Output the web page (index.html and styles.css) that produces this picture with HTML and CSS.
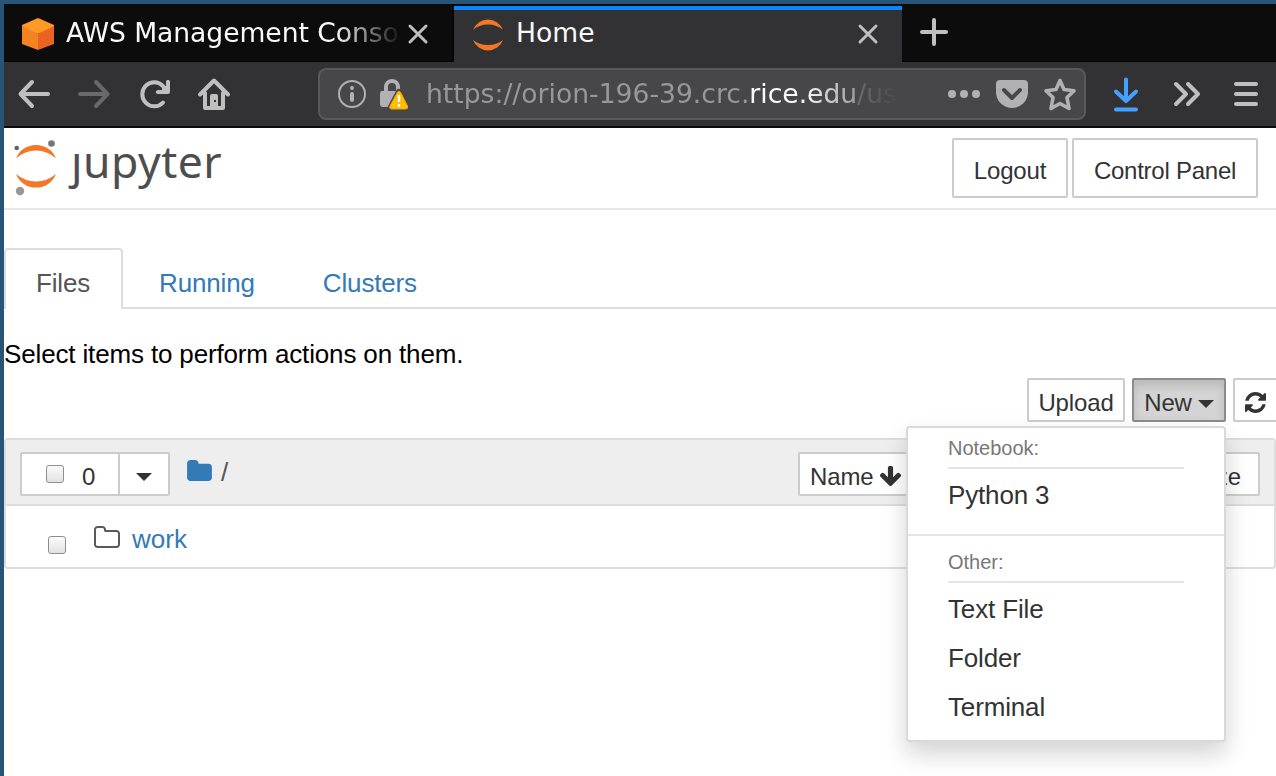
FILE: index.html
```html
<!DOCTYPE html>
<html lang="en">
<head>
<meta charset="utf-8">
<title>Home</title>
<link rel="stylesheet" href="styles.css">
</head>
<body>
<div class="window">
  <div class="tabbar">
    <div class="tab">
      <svg class="favicon" width="32" height="32" viewBox="0 0 32 32"><path fill="#ff9a24" d="M16 0 32 7v3L16 16 0 10V7z"/><path fill="#f58321" d="M0 8 16 16v16L0 26z"/><path fill="#eb6322" d="M32 8 16 16v16l16-6z"/></svg>
      <span class="tab-title fade">AWS Management Conso</span>
      <svg class="close" width="20" height="20" viewBox="0 0 20 20"><path d="M2 2 18 18M18 2 2 18"/></svg>
    </div>
    <div class="tab active">
      <svg class="favicon" width="32" height="32" viewBox="0 0 32 32"><path fill="#f37726" d="M1 11A16 16 0 0 1 31 11Q25 5.500 16 5.500T1 11zM1 21A16 16 0 0 0 31 21Q25 26 16 26T1 21z"/></svg>
      <span class="tab-title">Home</span>
      <svg class="close" width="20" height="20" viewBox="0 0 20 20"><path d="M2 2 18 18M18 2 2 18"/></svg>
    </div>
    <svg class="newtab" width="28" height="28" viewBox="0 0 28 28"><path d="M14 2v24M2 14h24"/></svg>
  </div>

  <div class="navbar">
    <svg class="nav" width="32" height="32" viewBox="0 0 32 32"><path d="M30 16H3M14 4 2.500 16 14 28"/></svg>
    <svg class="nav dim" width="32" height="32" viewBox="0 0 32 32"><path d="M2 16h27M18 4l11.500 12L18 28"/></svg>
    <svg class="nav" width="32" height="32" viewBox="0 0 32 32"><path d="M25 24.500A12 12 0 1 1 25 8"/><path class="solid" d="M32 3.500c0-2-4-2-4 0V8l-4-1v5h-4c-2.800 0-2.800 4 0 4h10q2 0 2-2z"/></svg>
    <svg class="nav" width="32" height="32" viewBox="0 0 32 32"><path d="M2 16.500 16 2.500l14 14M7 15v15h18V15"/><path class="solid" fill-rule="evenodd" d="M12 30V18q0-2 2-2h4q2 0 2 2v12zM16 22v2h2v-2z"/></svg>
    <div class="urlbar">
      <svg class="info" width="28" height="28" viewBox="0 0 28 28"><circle cx="14" cy="14" r="13" fill="none" stroke="#b1b1b3" stroke-width="2"/><circle cx="14" cy="8" r="2" fill="#b1b1b3"/><rect x="12" y="12" width="4" height="10" rx="2" fill="#b1b1b3"/></svg>
      <svg class="lock" width="28" height="30" viewBox="0 0 28 30"><path d="M6 13V8a6 6 0 0 1 12 0v4" fill="none" stroke="#b1b1b3" stroke-width="4"/><path d="M2 12h18v6L9 28H3q-3 0-3-3V15q0-3 2-3z" fill="#b1b1b3"/><path d="M16.500 11q2-3 4 0L28 27q1 3-2 3H10q-3 0-2-3z" fill="#474749"/><path d="M17.300 13.500q1.700-2.800 3.400 0L27.500 27q1 3-2 3h-14q-2.500 0-1.500-3z" fill="#ffbf00" stroke="#f5a400"/><path d="M19 16v7M19 25v3" stroke="#fff" stroke-width="2.400"/></svg>
      <span class="url">https://orion-196-39.crc.<b>rice.edu</b>/us</span>
      <svg class="dots" width="32" height="32" viewBox="0 0 32 32"><circle cx="4" cy="16" r="4"/><circle cx="16" cy="16" r="4"/><circle cx="28" cy="16" r="4"/></svg>
      <svg width="32" height="32" viewBox="0 0 32 32"><path fill="#b1b1b3" d="M4 2h24q4 0 4 4v8a16 16 0 0 1-32 0V6q0-4 4-4z"/><path d="M8 12l8 8 8-8" fill="none" stroke="#474749" stroke-width="4" stroke-linecap="round" stroke-linejoin="round"/></svg>
      <svg width="32" height="32" viewBox="0 0 32 32"><path d="M16 2.500l4 9 10 1.200-7 6.800L25 30.500 16 25.500l-9 5 2-11L2 12.700l10-1.200z" fill="none" stroke="#b1b1b3" stroke-width="3.600" stroke-linejoin="round"/></svg>
    </div>
    <svg class="nav blue" width="32" height="32" viewBox="0 0 32 32"><path d="M16 2v20M6 14l10 9.500 10-9.500M6 32h20" transform="translate(0 -.5)"/></svg>
    <svg class="nav" width="32" height="32" viewBox="0 0 32 32"><path d="M6 6l10 10L6 26M18 6l10 10-10 10"/></svg>
    <svg class="nav" width="32" height="32" viewBox="0 0 32 32"><path d="M6 6h20M6 16h20M6 26h20"/></svg>
  </div>

  <div class="page">
    <header class="header">
      <div class="logo">
        <svg width="44" height="58" viewBox="0 0 44 58"><path fill="#f37726" d="M2 19.500a21.500 21.500 0 0 1 40 0Q33 11.500 22 11.500T2 19.500zM2 35q9 7.500 20 7.500T42 35a21.500 21.500 0 0 1-40 0z"/><circle cx="37.500" cy="4.500" r="3.300" fill="#767677"/><circle cx="2.700" cy="9" r="2.300" fill="#616262"/><circle cx="6" cy="52" r="4.200" fill="#989798"/></svg>
        <span class="wordmark"><span class="stem">j</span>upyter</span>
      </div>
      <div class="account"><button class="btn large">Logout</button><button class="btn large">Control Panel</button></div>
    </header>

    <nav class="tabs">
      <a class="tablink current">Files</a>
      <a class="tablink">Running</a>
      <a class="tablink">Clusters</a>
    </nav>

    <p class="hint">Select items to perform actions on them.</p>

    <div class="actions">
      <button class="btn upload">Upload</button>
      <div class="dropdown">
        <button class="btn open">New<i class="caret"></i></button>
        <div class="menu">
          <div class="menu-head">Notebook:</div>
          <a class="menu-item">Python 3</a>
          <div class="divider"></div>
          <div class="menu-head">Other:</div>
          <a class="menu-item">Text File</a>
          <a class="menu-item">Folder</a>
          <a class="menu-item">Terminal</a>
        </div>
      </div>
      <button class="btn refresh"><svg width="21" height="21" viewBox="0 0 1536 1536"><path fill="#333" d="M1511 928q0 5-1 7-64 268-268 434.500t-478 166.500q-146 0-282.500-55t-243.500-157l-129 129q-19 19-45 19t-45-19-19-45v-448q0-26 19-45t45-19h448q26 0 45 19t19 45-19 45l-137 137q71 66 161 102t187 36q134 0 250-65t186-179q11-17 53-117 8-23 30-23h192q13 0 22.500 9.500t9.500 22.500zm25-800v448q0 26-19 45t-45 19h-448q-26 0-45-19t-19-45 19-45l138-138q-148-137-349-137-134 0-250 65t-186 179q-11 17-53 117-8 23-30 23h-199q-13 0-22.500-9.500t-9.500-22.500v-7q65-268 270-434.500t480-166.500q146 0 284 55.500t245 156.500l130-129q19-19 45-19t45 19 19 45z"/></svg></button>
    </div>

    <section class="list">
      <div class="list-head">
        <div class="group">
          <button class="btn select"><i class="check"></i>0</button>
          <button class="btn toggle"><i class="caret"></i></button>
        </div>
        <div class="crumbs">
          <svg width="25" height="21" viewBox="0 128 1664 1408"><path fill="#337ab7" d="M1664 608v704q0 92-66 158t-158 66h-1216q-92 0-158-66t-66-158v-960q0-92 66-158t158-66h320q92 0 158 66t66 158v32h672q92 0 158 66t66 158z"/></svg>
          <span>/</span>
        </div>
        <div class="sorts">
          <button class="btn name">Name<svg width="21" height="20" viewBox="21 0 1558 1483"><path fill="#333" d="M1579 704q0 52-37 91l-651 651q-39 37-91 37t-90-37l-651-651q-38-36-38-91 0-53 38-91l74-75q39-37 91-37 53 0 90 37l294 294v-704q0-52 38-90t90-38h128q52 0 90 38t38 90v704l294-294q37-37 90-37 52 0 91 37l75 75q37 39 37 91z"/></svg></button>
          <button class="btn size">File size</button>
        </div>
      </div>
      <div class="row">
        <i class="check"></i>
        <svg width="26" height="22" viewBox="0 128 1664 1408"><path fill="#5a5a5a" d="M1536 1312v-704q0-40-28-68t-68-28h-704q-40 0-68-28t-28-68v-64q0-40-28-68t-68-28h-320q-40 0-68 28t-28 68v960q0 40 28 68t68 28h1216q40 0 68-28t28-68zm128-704v704q0 92-66 158t-158 66h-1216q-92 0-158-66t-66-158v-960q0-92 66-158t158-66h320q92 0 158 66t66 158v32h672q92 0 158 66t66 158z"/></svg>
        <a class="entry">work</a>
      </div>
    </section>
  </div>
</div>
</body>
</html>
```
FILE: styles.css
```css
* { box-sizing: border-box; }
body { margin: 0; background: #fff; font-family: "Liberation Sans", Arial, sans-serif; font-size: 26px; letter-spacing: -0.15px; overflow: hidden; }
svg { display: block; flex: none; overflow: visible; }

.window { width: 1276px; height: 776px; padding: 4px 0 0 4px; background: #285577; overflow: hidden; }

/* Browser tabs */
.tabbar { display: flex; height: 58px; background: #0c0c0d; border-bottom: 1px solid #030303; font-family: "DejaVu Sans", sans-serif; font-size: 26.600px; letter-spacing: 0; }
.tab { display: flex; align-items: center; width: 450px; height: 57px; padding: 2px 24px 0 18px; border-right: 2px solid #050506; color: #f9f9fa; }
.tab.active { width: 448px; height: 58px; padding-top: 0; border-right: 0; background: linear-gradient(#0c0c0d 2px, #0a84ff 2px, #0a84ff 6px, #323234 6px); }
.tab-title { flex: 1; min-width: 0; margin: -3px 11px 0 12px; line-height: 57px; white-space: nowrap; }
.active .tab-title { margin-top: -2px; }
.fade { letter-spacing: -0.05px; -webkit-mask-image: linear-gradient(90deg, #000 270px, transparent 336px); mask-image: linear-gradient(90deg, #000 270px, transparent 336px); }
.active .favicon { margin-top: 3px; }
.favicon { margin-top: 1px; }
.close, .newtab { fill: none; stroke: #bfbfc0; stroke-linecap: round; }
.close { stroke-width: 3; }
.active .close { margin-top: 2px; }
.newtab { stroke-width: 4; margin: 14px 0 0 18px; }

/* Navigation toolbar */
.navbar { display: flex; align-items: center; gap: 28px; height: 66px; padding: 0 14px; background: #323234; border-bottom: 2px solid #0c0c0d; font-family: "DejaVu Sans", sans-serif; font-size: 26.600px; letter-spacing: 0; }
.nav { fill: none; stroke: #bfbfc0; stroke-width: 4; stroke-linecap: round; stroke-linejoin: round; }
.nav .solid { fill: #bfbfc0; stroke: none; }
.nav.dim { stroke: #69696b; }
.nav.blue { stroke: #45a1ff; }
.urlbar { display: flex; align-items: center; flex: 1; height: 52px; margin: 0 -4px 0 60px; padding: 0 8px 0 18px; border: 2px solid #59595b; border-radius: 8px; background: #474749; }
.lock { margin-left: 14px; }
.url { width: 480px; margin: 0 auto 0 18px; line-height: 48px; white-space: nowrap; color: #98989a; -webkit-mask-image: linear-gradient(90deg, #000 380px, transparent 474px); mask-image: linear-gradient(90deg, #000 380px, transparent 474px); }
.url b { font-weight: normal; color: #f9f9fa; }
.urlbar svg + svg:not(.lock) { margin-left: 16px; }
.dots { fill: #b1b1b3; }

/* Page header */
.page { height: 648px; background: #fff; }
.header { display: flex; justify-content: space-between; height: 82px; padding: 10px 18px 0 10px; border-bottom: 2px solid #e7e7e7; }
.logo { display: flex; gap: 13px; padding-top: 1px; }
.wordmark { height: 60px; line-height: 43px; font-family: "Noto Sans", sans-serif; font-size: 44.500px; letter-spacing: 0.500px; color: #4e4e4e; white-space: nowrap; }
.stem { display: inline-block; clip-path: inset(13px -10px -10px -20px); }
.account { display: flex; gap: 4px; }
.btn { display: flex; align-items: center; justify-content: center; height: 44px; margin: 0; padding: 5px 10px 0; border: 2px solid #ccc; border-radius: 2px; background: #fff; color: #333; font: 24px/36px "Liberation Sans", Arial, sans-serif; letter-spacing: -0.15px; white-space: nowrap; }
.large { width: 116px; height: 60px; padding: 5px 0 0; }
.large + .large { width: 186px; letter-spacing: -0.25px; }

/* Page tabs */
.tabs { display: flex; gap: 4px; height: 61px; margin-top: 38px; border-bottom: 2px solid #ddd; }
.tablink { height: 61px; padding: 3px 30px 0; border: 2px solid transparent; line-height: 60px; color: #337ab7; }
.tablink.current { width: 119px; border-color: #ddd; border-bottom: 0; border-radius: 4px 4px 0 0; background: #fff; color: #555; }
.hint { height: 69px; margin: 0; padding-top: 20px; line-height: 50px; color: #000; }

/* Action buttons and New menu */
.actions { display: flex; justify-content: flex-end; gap: 7px; height: 60px; margin-right: -24px; }
.upload { width: 98px; }
.caret { border: solid transparent; border-width: 8px 8px 0; border-top-color: #333; }
.dropdown { position: relative; }
.open { width: 94px; gap: 6px; border-color: #8c8c8c; background: #d4d4d4; box-shadow: inset 0 6px 10px rgba(0,0,0,.125); }
.open .caret { margin-top: 2px; }
.refresh { width: 67px; justify-content: flex-start; }
.menu { position: absolute; z-index: 2; top: 48px; right: 0; width: 320px; padding-bottom: 8px; border: 2px solid #d9d9d9; border-radius: 4px; background: #fff; box-shadow: 0 12px 24px rgba(0,0,0,.175); }
.menu-head { height: 41px; margin: 0 40px 2px; border-bottom: 2px solid #e5e5e5; font-size: 20px; line-height: 40px; letter-spacing: 0; color: #777; }
.menu-item { display: block; height: 49px; padding-left: 40px; line-height: 49px; color: #333; }
.divider { height: 2px; margin: 14px 0 6px; background: #e5e5e5; }

/* File list */
.list { border: 2px solid #ddd; border-radius: 4px; height: 131px; }
.list-head { display: flex; height: 66px; padding: 12px 14px 0; border-bottom: 2px solid #ddd; background: #eee; }
.group { display: flex; }
.select { width: 100px; gap: 18px; padding-left: 11px; border-radius: 2px 0 0 2px; }
.toggle { width: 52px; margin-left: -2px; border-radius: 0 2px 2px 0; }
.toggle .caret { margin-top: 1px; }
.check { flex: none; width: 18px; height: 18px; border: 1.500px solid #8f8f8a; border-radius: 3px; background: linear-gradient(#fbfbfb, #e2e2e2); }
.select .check { margin-top: -6px; }
.crumbs { display: flex; gap: 9px; margin-left: 17px; color: #555; line-height: 40px; }
.crumbs svg { margin-top: 8px; }
.sorts { display: flex; margin-left: auto; }
.name { width: 120px; justify-content: flex-start; gap: 7px; }
.name svg { margin-top: -1px; }
.size { width: 120px; margin-left: 222px; justify-content: flex-end; padding-right: 17px; }
.row { display: flex; align-items: flex-start; height: 61px; padding-left: 42px; }
.row .check { margin-top: 30px; }
.row svg { margin: 20px 12px 0 28px; }
.entry { line-height: 66px; letter-spacing: 0; color: #337ab7; }
```
